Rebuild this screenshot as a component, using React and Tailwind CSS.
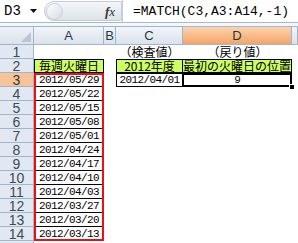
import React from "react";

const jp = { fontFamily: '"Noto Sans CJK JP", sans-serif' };
const mono = { fontFamily: '"Liberation Mono", monospace' };
const hdr = { fontFamily: '"Liberation Sans Narrow", "Liberation Sans", sans-serif' };

const dates = [
  "2012/05/29",
  "2012/05/22",
  "2012/05/15",
  "2012/05/08",
  "2012/05/01",
  "2012/04/24",
  "2012/04/17",
  "2012/04/10",
  "2012/04/03",
  "2012/03/27",
  "2012/03/20",
  "2012/03/13",
];

function FormulaBar() {
  return (
    <div className="flex h-[26px] flex-col bg-[#f3f6fa]">
      <div className="flex h-[23px] items-stretch border-b border-[#a9b7c9] bg-white">
        <div className="flex w-[44px] items-center pl-[4px]">
          <span className="text-[14px] leading-none text-black" style={mono}>D3</span>
          <svg width="8" height="5" viewBox="0 0 8 5" className="ml-[9px]">
            <path d="M0 0h7L3.5 4z" fill="#111" />
          </svg>
        </div>
        <div className="my-[1px] flex w-[78px] items-center rounded-l-full border border-[#c3ccd8] bg-gradient-to-b from-[#f4f6f9] to-[#dde3ea] pr-[6px]">
          <div className="ml-[1px] h-[17px] w-[17px] rounded-full border border-[#c9d0d9] bg-gradient-to-br from-[#ffffff] to-[#d5dbe3]" />
          <span className="ml-auto text-[13px] italic leading-none text-[#333]" style={{ fontFamily: '"Liberation Serif", serif' }}>
            <b>f</b>x
          </span>
        </div>
        <div className="flex flex-1 items-center border-l border-[#c3ccd8] pl-[10px]">
          <span className="text-[13px] leading-none text-black" style={mono}>=MATCH(C3,A3:A14,-1)</span>
        </div>
      </div>
    </div>
  );
}

function ColHead({ label, selected }) {
  return (
    <div
      className={
        "flex items-center justify-center border-r border-b border-[#9eb6ce] text-[13px] leading-none " +
        (selected
          ? "bg-gradient-to-b from-[#fcd3ae] via-[#f9bb8a] to-[#f3a469] text-[#213a3a]"
          : "bg-gradient-to-b from-[#f2f5f9] to-[#dbe2ec] text-[#27393d]")
      }
      style={hdr}
    >
      {label}
    </div>
  );
}

function RowHead({ n, row }) {
  return (
    <div
      className={
        "col-start-1 flex items-center justify-center border-r border-b border-[#9eb6ce] text-[14px] leading-none " +
        (n === 3 ? "bg-[#f8c397] text-[#2f3a44]" : "bg-[#e2e8f1] text-[#3d4a58]")
      }
      style={{ ...hdr, gridRowStart: row }}
    >
      {n}
    </div>
  );
}

function Green({ children, className = "" }) {
  return (
    <div
      className={"flex items-center justify-center whitespace-nowrap bg-[#ccff66] text-[12px] leading-[12px] text-black " + className}
      style={jp}
    >
      {children}
    </div>
  );
}

export default function App() {
  return (
    <div className="h-[243px] w-[298px] overflow-hidden bg-white">
      <FormulaBar />
      <div className="grid grid-cols-[34px_70px_12px_67px_109px_6px] grid-rows-[18px_repeat(14,14px)_3px] border-t border-[#9eb6ce]">
        {/* header row */}
        <div className="relative border-r border-b border-[#9eb6ce] bg-gradient-to-b from-[#eef2f7] to-[#dbe2ec]">
          <svg width="10" height="10" viewBox="0 0 10 10" className="absolute right-[2px] bottom-[2px]">
            <path d="M10 0V10H0z" fill="#bac6d4" />
          </svg>
        </div>
        <ColHead label="A" />
        <ColHead label="B" />
        <ColHead label="C" />
        <ColHead label="D" selected />
        <ColHead label="" />

        {/* row headers */}
        {Array.from({ length: 14 }, (_, i) => (
          <RowHead key={i} n={i + 1} row={i + 2} />
        ))}

        {/* row 1 */}
        <div className="col-start-4 row-start-2 flex items-center justify-center text-[12px] leading-[12px] whitespace-nowrap" style={jp}>（検査値）</div>
        <div className="col-start-5 row-start-2 flex items-center justify-center text-[12px] leading-[12px] whitespace-nowrap" style={jp}>（戻り値）</div>

        {/* row 2 */}
        <Green className="col-start-2 row-start-3 border border-black">毎週火曜日</Green>
        <Green className="col-start-4 row-start-3 border border-black">2012年度</Green>
        <Green className="col-start-5 row-start-3 border-y border-r border-black">最初の火曜日の位置</Green>

        {/* dates block A3:A14 */}
        <div className="col-start-2 row-start-4 row-span-12 flex flex-col outline-2 -outline-offset-2 outline-[#ee1111]">
          {dates.map((d, i) => (
            <div
              key={d}
              className={"flex h-[14px] items-center justify-center pt-[1px] text-[11px] leading-none tracking-[-0.6px] text-black " + (i < 11 ? "border-b border-black" : "")}
              style={mono}
            >
              {d}
            </div>
          ))}
        </div>

        {/* row 3 others */}
        <div className="col-start-4 row-start-4 flex items-center justify-center border border-black pt-[1px] text-[11px] leading-none tracking-[-0.6px]" style={mono}>
          2012/04/01
        </div>
        <div className="relative col-start-5 row-start-4 flex items-center justify-center pt-[1px] text-[11px] leading-none" style={mono}>
          9
          <div className="absolute -left-[1px] top-0 right-0 bottom-0 border-2 border-black" />
          <div className="absolute -right-[3px] -bottom-[3px] h-[6px] w-[6px] border border-white bg-black" />
        </div>

        {/* row 15 partial */}
        <div className="col-start-1 row-start-16 border-r border-[#9eb6ce] bg-[#e2e8f1]" />
      </div>
    </div>
  );
}
